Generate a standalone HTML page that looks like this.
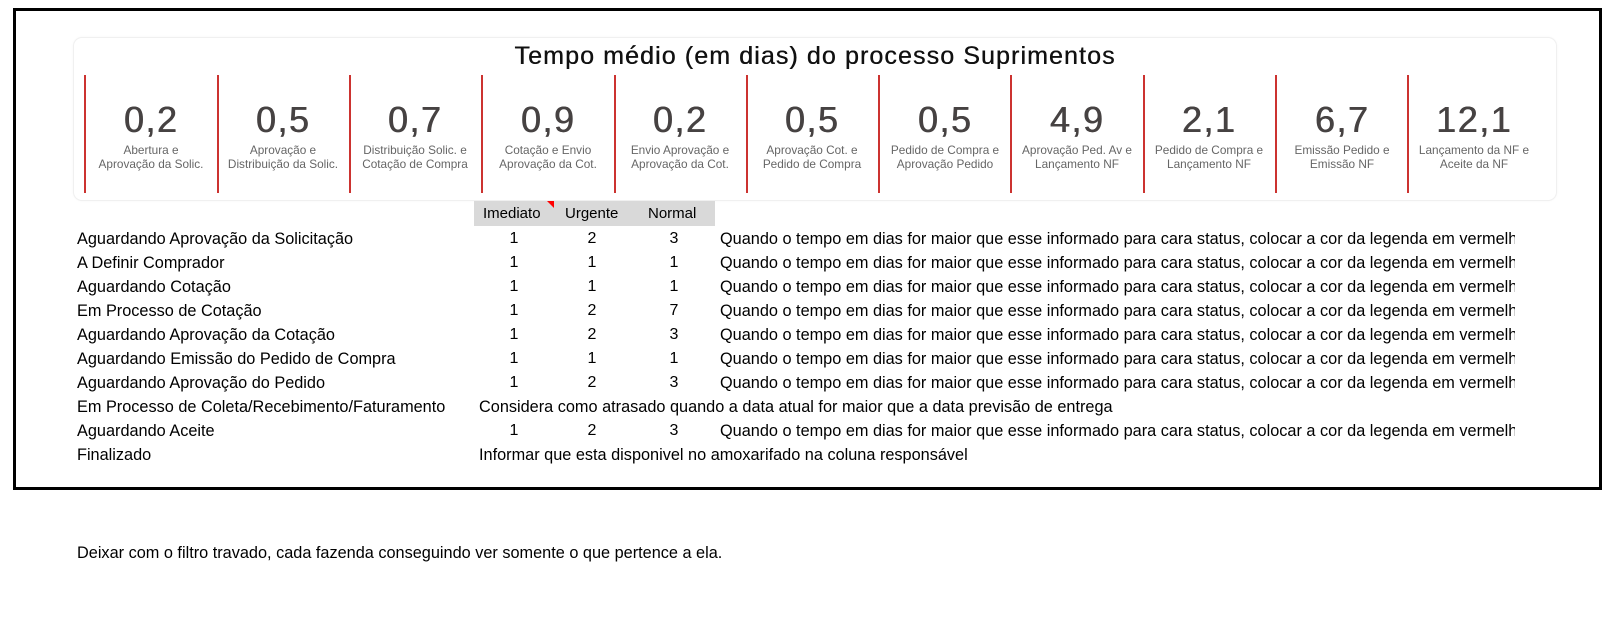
<!DOCTYPE html>
<html><head><meta charset="utf-8">
<style>
*{margin:0;padding:0;box-sizing:border-box}
body{width:1603px;height:632px;background:#fff;position:relative;overflow:hidden;font-family:"Liberation Sans",sans-serif;color:#000}
.box{position:absolute;left:13px;top:8px;width:1589px;height:482px;border:3px solid #000}
.card{position:absolute;left:74px;top:38px;width:1482px;height:162px;border-radius:8px;background:#fff;box-shadow:0 0 0 1px #f0f0f0, 0 0 3px #eee}
.title{position:absolute;left:74px;width:1482px;top:42px;text-align:center;font-size:25px;letter-spacing:1.1px;color:#111;text-shadow:0.4px 0 0 #111}
.div{position:absolute;top:75px;width:2px;height:118px;background:#cc3330}
.kpi{position:absolute;top:100px;width:130px;text-align:center;color:#464242}
.kpi .v{font-size:36px;line-height:40px;letter-spacing:1.5px;text-shadow:0.6px 0 0 #464242}
.kpi .l{font-size:11.8px;line-height:14px;color:#666;margin-top:3px;white-space:nowrap;margin-left:-10px;margin-right:-10px}
.hdr{position:absolute;left:474px;top:201px;width:241px;height:25px;background:#d9d9d9}
.tri{position:absolute;left:547px;top:201px;width:0;height:0;border-top:7px solid #f00;border-left:7px solid transparent}
.t{position:absolute;font-size:16.3px;line-height:18px;white-space:nowrap}
.h{position:absolute;font-size:15px;line-height:18px;white-space:nowrap}
.c{position:absolute;font-size:16px;line-height:18px;width:40px;text-align:center}
.q{position:absolute;left:720px;width:795px;overflow:hidden;font-size:16.3px;line-height:18px;white-space:nowrap}
</style></head><body>
<div class="box"></div>
<div class="card"></div>
<div class="title">Tempo médio (em dias) do processo Suprimentos</div>

<div class="div" style="left:84px"></div>
<div class="div" style="left:217px"></div>
<div class="div" style="left:349px"></div>
<div class="div" style="left:481px"></div>
<div class="div" style="left:614px"></div>
<div class="div" style="left:746px"></div>
<div class="div" style="left:878px"></div>
<div class="div" style="left:1010px"></div>
<div class="div" style="left:1143px"></div>
<div class="div" style="left:1275px"></div>
<div class="div" style="left:1407px"></div>

<div class="kpi" style="left:86px"><div class="v">0,2</div><div class="l">Abertura e<br>Aprovação da Solic.</div></div>
<div class="kpi" style="left:218px"><div class="v">0,5</div><div class="l">Aprovação e<br>Distribuição da Solic.</div></div>
<div class="kpi" style="left:350px"><div class="v">0,7</div><div class="l">Distribuição Solic. e<br>Cotação de Compra</div></div>
<div class="kpi" style="left:483px"><div class="v">0,9</div><div class="l">Cotação e Envio<br>Aprovação da Cot.</div></div>
<div class="kpi" style="left:615px"><div class="v">0,2</div><div class="l">Envio Aprovação e<br>Aprovação da Cot.</div></div>
<div class="kpi" style="left:747px"><div class="v">0,5</div><div class="l">Aprovação Cot. e<br>Pedido de Compra</div></div>
<div class="kpi" style="left:880px"><div class="v">0,5</div><div class="l">Pedido de Compra e<br>Aprovação Pedido</div></div>
<div class="kpi" style="left:1012px"><div class="v">4,9</div><div class="l">Aprovação Ped. Av e<br>Lançamento NF</div></div>
<div class="kpi" style="left:1144px"><div class="v">2,1</div><div class="l">Pedido de Compra e<br>Lançamento NF</div></div>
<div class="kpi" style="left:1277px"><div class="v">6,7</div><div class="l">Emissão Pedido e<br>Emissão NF</div></div>
<div class="kpi" style="left:1409px"><div class="v">12,1</div><div class="l">Lançamento da NF e<br>Aceite da NF</div></div>

<div class="hdr"></div><div class="tri"></div>
<div class="h" style="left:483px;top:205px">Imediato</div>
<div class="h" style="left:565px;top:205px">Urgente</div>
<div class="h" style="left:648px;top:205px">Normal</div>

<div class="t" style="left:77px;top:230px">Aguardando Aprovação da Solicitação</div>
<div class="c" style="left:494px;top:230px">1</div><div class="c" style="left:572px;top:230px">2</div><div class="c" style="left:654px;top:230px">3</div>
<div class="q" style="top:230px">Quando o tempo em dias for maior que esse informado para cara status, colocar a cor da legenda em vermelho</div>

<div class="t" style="left:77px;top:254px">A Definir Comprador</div>
<div class="c" style="left:494px;top:254px">1</div><div class="c" style="left:572px;top:254px">1</div><div class="c" style="left:654px;top:254px">1</div>
<div class="q" style="top:254px">Quando o tempo em dias for maior que esse informado para cara status, colocar a cor da legenda em vermelho</div>

<div class="t" style="left:77px;top:278px">Aguardando Cotação</div>
<div class="c" style="left:494px;top:278px">1</div><div class="c" style="left:572px;top:278px">1</div><div class="c" style="left:654px;top:278px">1</div>
<div class="q" style="top:278px">Quando o tempo em dias for maior que esse informado para cara status, colocar a cor da legenda em vermelho</div>

<div class="t" style="left:77px;top:302px">Em Processo de Cotação</div>
<div class="c" style="left:494px;top:302px">1</div><div class="c" style="left:572px;top:302px">2</div><div class="c" style="left:654px;top:302px">7</div>
<div class="q" style="top:302px">Quando o tempo em dias for maior que esse informado para cara status, colocar a cor da legenda em vermelho</div>

<div class="t" style="left:77px;top:326px">Aguardando Aprovação da Cotação</div>
<div class="c" style="left:494px;top:326px">1</div><div class="c" style="left:572px;top:326px">2</div><div class="c" style="left:654px;top:326px">3</div>
<div class="q" style="top:326px">Quando o tempo em dias for maior que esse informado para cara status, colocar a cor da legenda em vermelho</div>

<div class="t" style="left:77px;top:350px">Aguardando Emissão do Pedido de Compra</div>
<div class="c" style="left:494px;top:350px">1</div><div class="c" style="left:572px;top:350px">1</div><div class="c" style="left:654px;top:350px">1</div>
<div class="q" style="top:350px">Quando o tempo em dias for maior que esse informado para cara status, colocar a cor da legenda em vermelho</div>

<div class="t" style="left:77px;top:374px">Aguardando Aprovação do Pedido</div>
<div class="c" style="left:494px;top:374px">1</div><div class="c" style="left:572px;top:374px">2</div><div class="c" style="left:654px;top:374px">3</div>
<div class="q" style="top:374px">Quando o tempo em dias for maior que esse informado para cara status, colocar a cor da legenda em vermelho</div>

<div class="t" style="left:77px;top:398px">Em Processo de Coleta/Recebimento/Faturamento</div>
<div class="t" style="left:479px;top:398px">Considera como atrasado quando a data atual for maior que a data previsão de entrega</div>

<div class="t" style="left:77px;top:422px">Aguardando Aceite</div>
<div class="c" style="left:494px;top:422px">1</div><div class="c" style="left:572px;top:422px">2</div><div class="c" style="left:654px;top:422px">3</div>
<div class="q" style="top:422px">Quando o tempo em dias for maior que esse informado para cara status, colocar a cor da legenda em vermelho</div>

<div class="t" style="left:77px;top:446px">Finalizado</div>
<div class="t" style="left:479px;top:446px">Informar que esta disponivel no amoxarifado na coluna responsável</div>

<div class="t" style="left:77px;top:544px">Deixar com o filtro travado, cada fazenda conseguindo ver somente o que pertence a ela.</div>
</body></html>
